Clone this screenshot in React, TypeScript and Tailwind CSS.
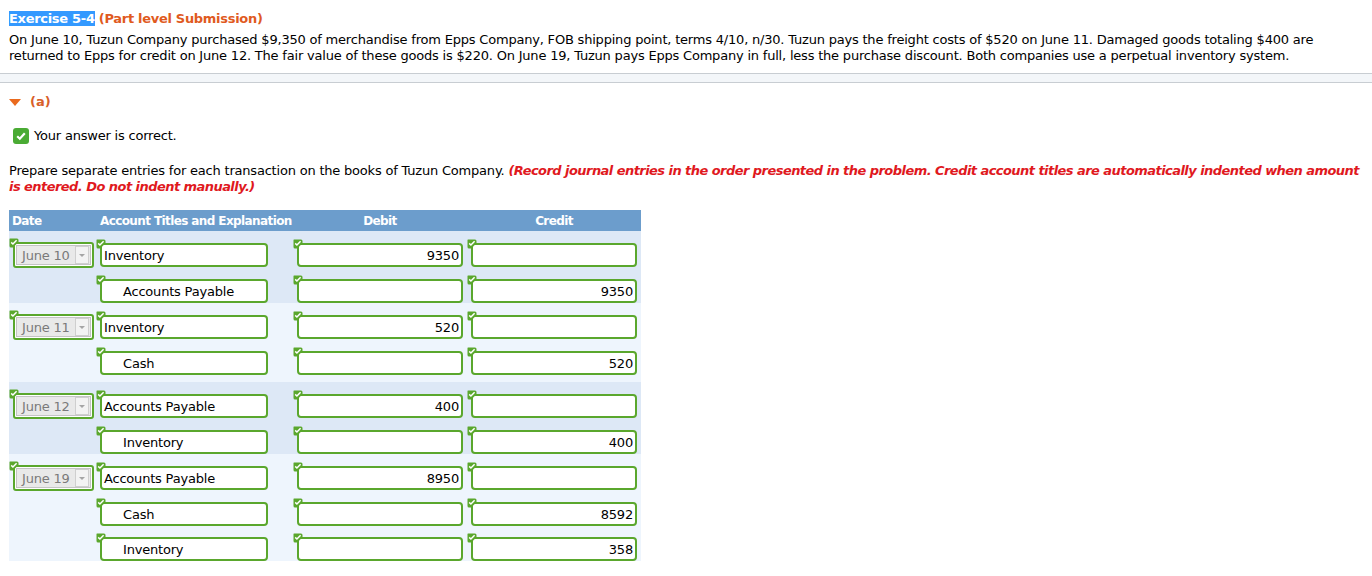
const GREEN = "border-[#5aa72d]";

type Row = {
  date?: string;
  account: string;
  credit?: boolean;
  debit?: string;
  creditAmt?: string;
};

type Group = { rows: Row[]; dark: boolean };

const groups: Group[] = [
  {
    dark: true,
    rows: [
      { date: "June 10", account: "Inventory", debit: "9350" },
      { account: "Accounts Payable", credit: true, creditAmt: "9350" },
    ],
  },
  {
    dark: false,
    rows: [
      { date: "June 11", account: "Inventory", debit: "520" },
      { account: "Cash", credit: true, creditAmt: "520" },
    ],
  },
  {
    dark: true,
    rows: [
      { date: "June 12", account: "Accounts Payable", debit: "400" },
      { account: "Inventory", credit: true, creditAmt: "400" },
    ],
  },
  {
    dark: false,
    rows: [
      { date: "June 19", account: "Accounts Payable", debit: "8950" },
      { account: "Cash", credit: true, creditAmt: "8592" },
      { account: "Inventory", credit: true, creditAmt: "358" },
    ],
  },
];

const Tick = () => (
  <svg
    width="10"
    height="10"
    viewBox="0 0 10 10"
    className="absolute -left-[4px] -top-[4px]"
  >
    <path d="M1 0.5 H8 Q9.5 0.5 9.5 2 V4 L4 9.5 H2 Q0.5 9.5 0.5 8 V1 Q0.5 0.5 1 0.5 Z" fill="#5aa72d" />
    <path d="M2.2 4.4 L3.9 6 L7.6 2.2" stroke="#fff" strokeWidth="1.5" fill="none" />
  </svg>
);

const Field = ({
  width,
  value = "",
  align = "left",
  indent = false,
}: {
  width: string;
  value?: string;
  align?: "left" | "right";
  indent?: boolean;
}) => (
  <div className={`relative ${width} h-[24px]`}>
    <Tick />
    <div
      className={`h-full rounded-[4px] border-2 ${GREEN} bg-white flex items-center leading-none ${
        align === "right" ? "justify-end pr-[2px]" : indent ? "pl-[21px]" : "pl-[2px]"
      }`}
    >
      {value}
    </div>
  </div>
);

const DateSelect = ({ value }: { value: string }) => (
  <div className="relative w-[81px] h-[26px]">
    <Tick />
    <div className={`h-full rounded-[3px] border-2 ${GREEN} bg-white p-px`}>
      <div className="h-full flex items-center justify-between bg-[#e9e9e9] border border-[#c4c4c4] pl-[5px] pr-px">
        <span className="text-[#7a7a7a] leading-none">{value}</span>
        <div className="w-[14px] h-[18px] bg-[#f3f3f3] border border-[#cfcfcf] flex items-center justify-center">
          <div className="w-0 h-0 border-l-[3px] border-r-[3px] border-t-[3px] border-l-transparent border-r-transparent border-t-[#a5a5a5]" />
        </div>
      </div>
    </div>
  </div>
);

export default function App() {
  return (
    <div className="w-[1372px] h-[576px] overflow-hidden bg-white text-black text-[13px] font-['Verdana','DejaVu_Sans',sans-serif]">
      <div className="px-[9px] pt-[11px]">
        <div className="leading-4 font-bold whitespace-nowrap tracking-[-0.3px]">
          <span className="bg-[#3399ff] text-white">Exercise 5-4</span>
          <span className="text-[#e05a1e]"> (Part level Submission)</span>
        </div>
        <p className="mt-[5px] leading-4 whitespace-nowrap tracking-[-0.2px]">
          On June 10, Tuzun Company purchased $9,350 of merchandise from Epps Company, FOB shipping point, terms 4/10, n/30. Tuzun pays the freight costs of $520 on June 11. Damaged goods totaling $400 are
          <br />
          returned to Epps for credit on June 12. The fair value of these goods is $220. On June 19, Tuzun pays Epps Company in full, less the purchase discount. Both companies use a perpetual inventory system.
        </p>
      </div>

      <div className="mt-[9px] h-[10px] border-y border-[#c8cdd2] bg-[#f3f6f9]" />

      <div className="px-[9px]">
        <div className="mt-[11px] h-4 flex items-center gap-[9px] text-[#d8602a] font-bold">
          <div className="w-0 h-0 border-l-[6px] border-r-[6px] border-t-[7px] border-l-transparent border-r-transparent border-t-[#ea6a1e]" />
          <span className="leading-4">(a)</span>
        </div>

        <div className="mt-[18px] h-4 flex items-center gap-[5px] pl-[4px]">
          <div className="w-[16px] h-[16px] rounded-[3px] bg-[#4aab34] flex items-center justify-center">
            <svg width="12" height="12" viewBox="0 0 12 12">
              <path d="M2.2 6.2 L4.8 8.7 L9.8 3.2" stroke="#fff" strokeWidth="2.2" fill="none" />
            </svg>
          </div>
          <span className="leading-4 tracking-[-0.2px]">Your answer is correct.</span>
        </div>

        <p className="mt-[19px] leading-4 whitespace-nowrap tracking-[-0.2px]">
          Prepare separate entries for each transaction on the books of Tuzun Company.{" "}
          <span className="text-[#e0191e] font-bold italic tracking-[-0.55px]">
            (Record journal entries in the order presented in the problem. Credit account titles are automatically indented when amount
            <br />
            is entered. Do not indent manually.)
          </span>
        </p>

        <div className="mt-[15px] w-[632px]">
          <div className="h-[21px] pt-px bg-[#6c9dcc] text-white font-bold text-[12px] flex items-center whitespace-nowrap tracking-[-0.6px]">
            <span className="w-[91px] pl-[3px]">Date</span>
            <span className="w-[197px]">Account Titles and Explanation</span>
            <span className="w-[166px] text-center">Debit</span>
            <span className="ml-[8px] w-[166px] text-center">Credit</span>
          </div>

          {groups.map((g, gi) => (
            <div
              key={gi}
              className={`${g.dark ? "bg-[#dde8f6]" : "bg-[#eef5fd]"} ${gi === 1 ? "pb-[7px]" : ""}`}
            >
              {g.rows.map((r, ri) => (
                <div
                  key={ri}
                  className={`flex items-end tracking-[-0.2px] ${gi === 3 && ri === 2 ? "h-[35px]" : "h-[36px]"}`}
                >
                  <div className="ml-[4px] w-[81px] h-[24px] flex items-center">
                    {r.date && <DateSelect value={r.date} />}
                  </div>
                  <div className="ml-[6px]">
                    <Field width="w-[168px]" value={r.account} indent={r.credit} />
                  </div>
                  <div className="ml-[29px]">
                    <Field width="w-[166px]" value={r.debit} align="right" />
                  </div>
                  <div className="ml-[8px]">
                    <Field width="w-[166px]" value={r.creditAmt} align="right" />
                  </div>
                </div>
              ))}
            </div>
          ))}
        </div>
      </div>
    </div>
  );
}
